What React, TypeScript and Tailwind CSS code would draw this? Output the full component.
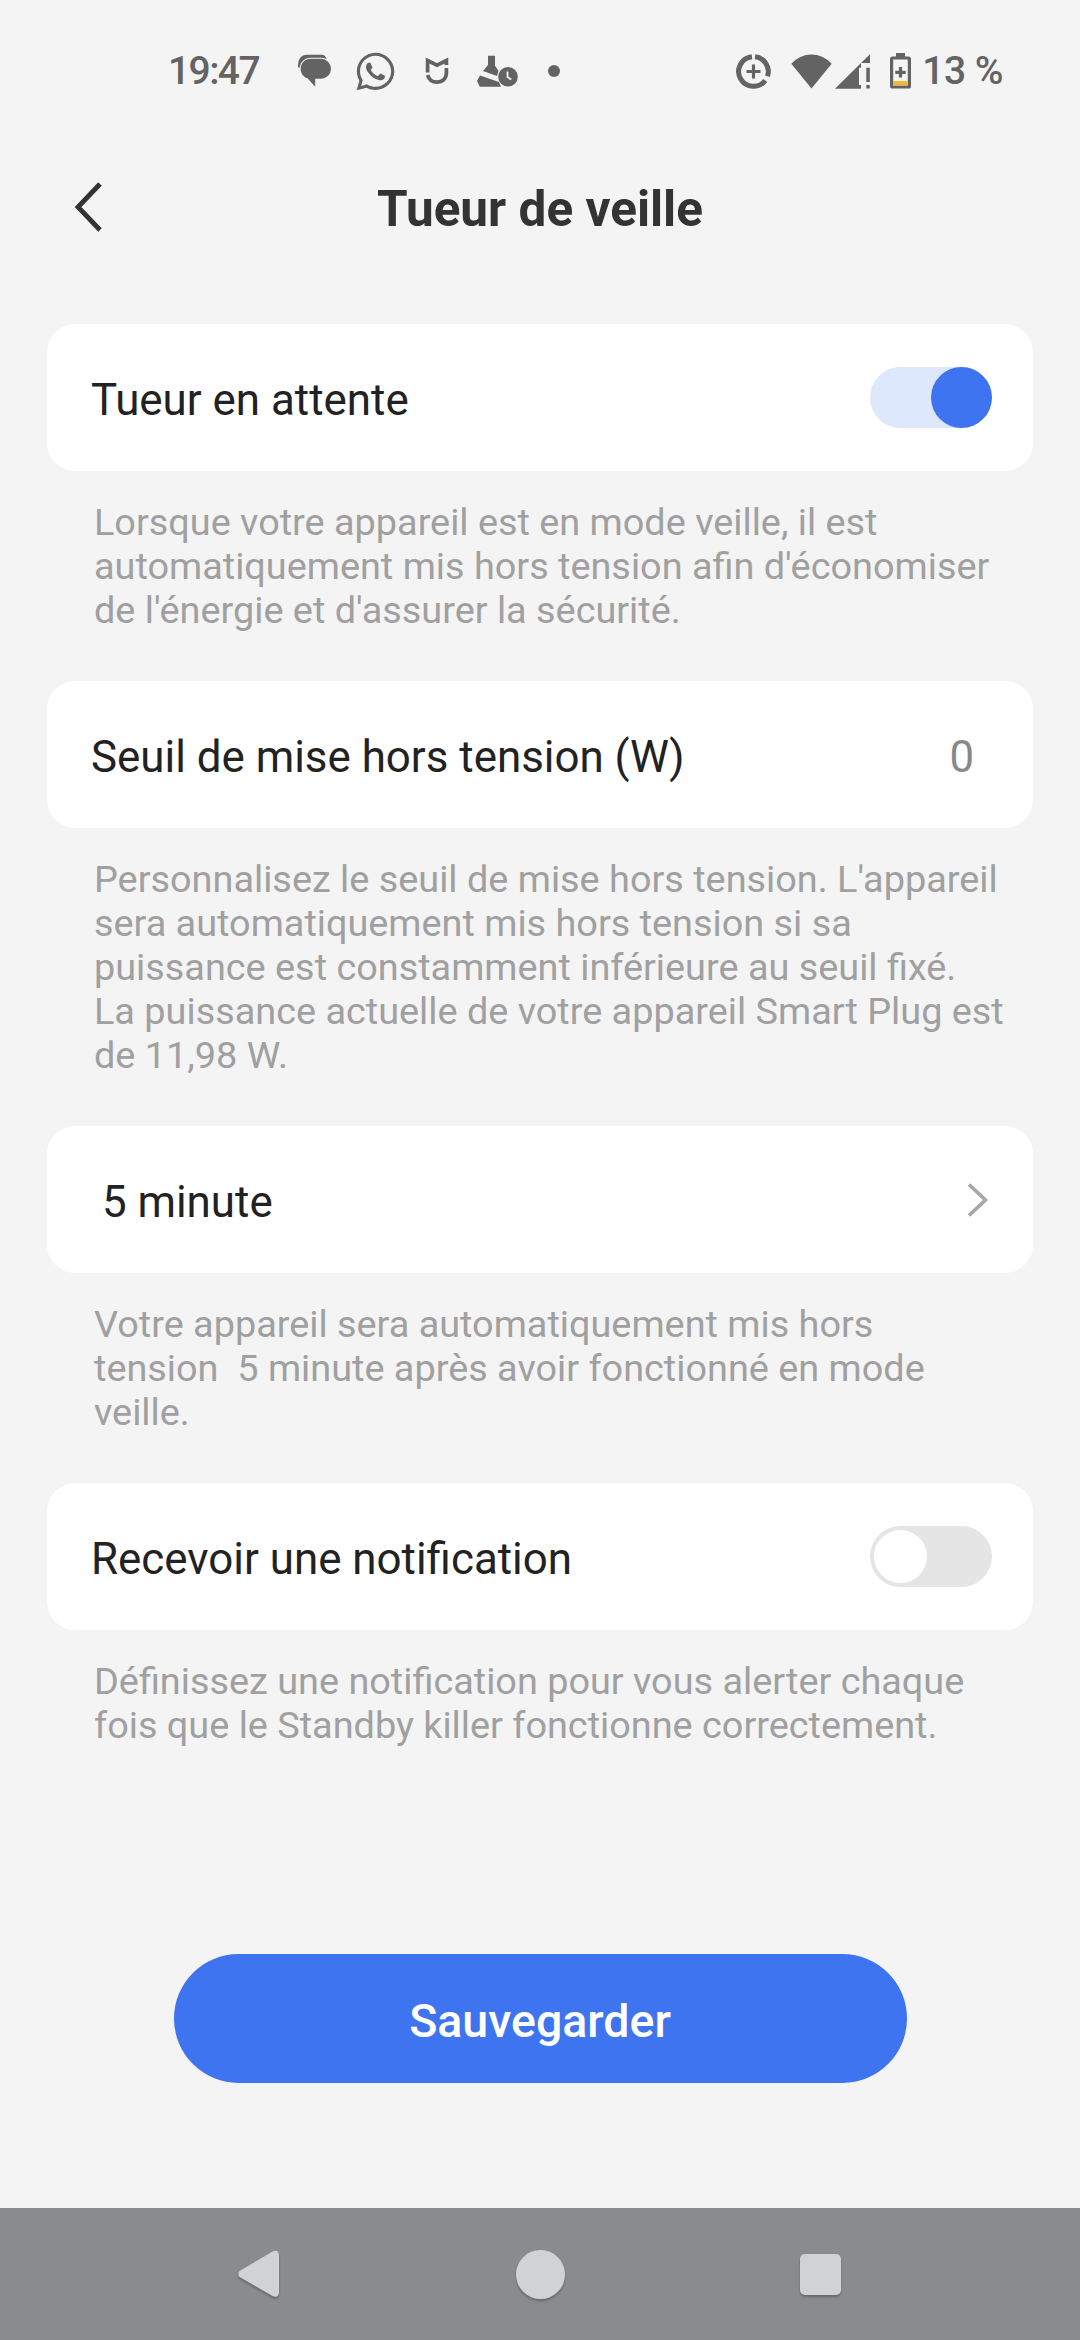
import { ReactNode, useState } from "react";
import { FaWhatsapp } from "react-icons/fa";

export default function App() {
  const [standbyKiller, setStandbyKiller] = useState(true);
  const [notify, setNotify] = useState(false);

  return (
    <div className="flex h-[2340px] w-[1080px] flex-col overflow-hidden bg-[#f4f4f4] font-['Roboto',sans-serif]">
      <StatusBar />
      <header className="grid h-[130px] grid-cols-[180px_1fr_180px] items-center">
        <button type="button" aria-label="Retour" className="pl-[74px]">
          <svg width="28" height="50" viewBox="0 0 28 50" fill="none" stroke="#333" strokeWidth="4.8">
            <path d="M26 2 4 25l22 23" />
          </svg>
        </button>
        <h1 className="pt-1 text-center text-[49.5px] leading-[58px] font-bold text-[#333]">
          Tueur de veille
        </h1>
      </header>

      <main className="flex flex-1 flex-col px-[47px] pt-[52px]">
        <Setting
          label="Tueur en attente"
          description={[
            "Lorsque votre appareil est en mode veille, il est",
            "automatiquement mis hors tension afin d'économiser",
            "de l'énergie et d'assurer la sécurité.",
          ]}
        >
          <Toggle checked={standbyKiller} onChange={setStandbyKiller} />
        </Setting>
        <Setting
          label="Seuil de mise hors tension (W)"
          description={[
            "Personnalisez le seuil de mise hors tension. L'appareil",
            "sera automatiquement mis hors tension si sa",
            "puissance est constamment inférieure au seuil fixé.",
            "La puissance actuelle de votre appareil Smart Plug est",
            "de 11,98 W.",
          ]}
        >
          <span className="pt-1.5 pr-[18px] text-[43.8px] leading-[51px] text-[#888]">0</span>
        </Setting>
        <Setting
          label=" 5 minute"
          description={[
            "Votre appareil sera automatiquement mis hors",
            "tension  5 minute après avoir fonctionné en mode",
            "veille.",
          ]}
        >
          <svg className="mr-[3px]" width="22" height="36" viewBox="0 0 22 36" fill="none" stroke="#a6a6a6" strokeWidth="3.6">
            <path d="M2 2.500 18.500 18 2 33.500" />
          </svg>
        </Setting>
        <Setting
          label="Recevoir une notification"
          description={[
            "Définissez une notification pour vous alerter chaque",
            "fois que le Standby killer fonctionne correctement.",
          ]}
        >
          <Toggle checked={notify} onChange={setNotify} />
        </Setting>

        <button
          type="button"
          className="mt-[158px] h-[129px] w-[733px] self-center rounded-full bg-[#3e74f0] pt-1.5 text-[46.5px] font-medium text-white"
        >
          Sauvegarder
        </button>
      </main>

      <NavigationBar />
    </div>
  );
}

const Setting = ({
  label,
  description,
  children,
}: {
  label: string;
  description: string[];
  children: ReactNode;
}) => {
  return (
    <section>
      <div className="flex h-[147px] items-center justify-between rounded-[28px] bg-white pr-[41px] pl-[44px]">
        <span className="pt-1.5 text-[43.9px] leading-[51px] whitespace-pre text-[#222]">{label}</span>
        {children}
      </div>
      <p className="pt-[29px] pb-[49px] pl-[47px] text-[37.85px] leading-[44px] whitespace-pre text-[#a0a0a0]">
        {description.join("\n")}
      </p>
    </section>
  );
};

const Toggle = ({
  checked,
  onChange,
}: {
  checked: boolean;
  onChange: (checked: boolean) => void;
}) => {
  return (
    <button
      type="button"
      role="switch"
      aria-checked={checked}
      onClick={() => onChange(!checked)}
      className={`flex h-[61px] w-[122px] items-center rounded-full ${
        checked ? "justify-end bg-[#dee8fd]" : "bg-[#e5e5e5] pl-1"
      }`}
    >
      <span
        className={`rounded-full ${
          checked ? "size-[61px] bg-[#3e74f0]" : "size-[53px] bg-white"
        }`}
      />
    </button>
  );
};

const StatusBar = () => {
  return (
    <div className="flex h-[142px] items-center justify-between pr-[77px] pl-[168px] text-[#636363]">
      <div className="flex items-center">
        <span className="w-[130px] text-[39px] font-medium tracking-[-1.6px]">19:47</span>
        {/* messages */}
        <svg width="34" height="34" viewBox="0 0 34 34" fill="currentColor">
          <path d="M0 12.500C0 5 3 .7 9 .7h15c2 0 3.500 1.500 4.500 4V9H8L1 14z" />
          <path
            d="M12.700 4.700H23a10 10 0 0 1 0 20h-5.800v8L9.500 24.200C5 23 2.700 19 2.700 14.700c0-6 4.500-10 10-10z"
            stroke="#f4f4f4"
            strokeWidth="2"
            paintOrder="stroke"
          />
        </svg>
        <FaWhatsapp className="ml-[22px] size-[43px]" />
        {/* mi home */}
        <svg className="ml-[28px]" width="24" height="28" viewBox="0 0 24 28" fill="none" stroke="currentColor" strokeWidth="3.700">
          <path d="M2.600 15.500V3.500L12 8.200l9.400-4.700V8" />
          <path d="M2.600 18C4 23 7.500 25.200 12 25.200c5.500 0 9.400-3.700 9.400-9.200v-5" />
        </svg>
        {/* lab flask with clock */}
        <svg className="ml-[28px]" width="42" height="33" viewBox="0 0 42 33" fill="currentColor">
          <path d="M11 .7h7v10l3.500 5L20 21 6 16l5-6z" />
          <path d="M3 20.500 22 27l2 4.800H2.800L0 26z" />
          <circle cx="31" cy="21.700" r="9.800" />
          <path d="M30.500 16.500v5.500l3.700 2.500" fill="none" stroke="#f4f4f4" strokeWidth="1.800" />
        </svg>
        <span className="ml-[29px] size-3 rounded-full bg-[#636363]" />
      </div>

      <div className="flex items-center">
        {/* data saver */}
        <svg width="35" height="35" viewBox="0 0 35 35" fill="none" stroke="currentColor">
          <path
            d="M19.050 2.800A14.800 14.800 0 0 1 31.500 22.300M29.300 26.400A14.800 14.800 0 1 1 15.950 2.800"
            strokeWidth="5"
          />
          <path d="M10.500 17.500h14M17.500 10.500v14" strokeWidth="3.2" />
        </svg>
        <svg className="ml-[20px]" width="41" height="35" viewBox="0 0 41 35" fill="currentColor">
          <path d="M.3 9.800a26.600 26.600 0 0 1 40.400 0L20.500 34.500z" />
        </svg>
        {/* mobile signal, no data */}
        <svg className="ml-[3px]" width="35" height="35" viewBox="0 0 35 35" fill="currentColor">
          <path d="M35 .3V9h-9zM0 34.700 26 9v4.700h-2V31h2v3.700zM31.300 13.700h3.500V28h-3.500zM31.300 31h3.500v3.500h-3.500z" />
        </svg>
        <svg className="ml-[20px]" width="21" height="36" viewBox="0 0 21 36">
          <path d="M6 0h9v4H6z" fill="currentColor" />
          <rect x="1.600" y="5" width="17.800" height="29" rx="1" fill="none" stroke="currentColor" strokeWidth="3.200" />
          <path d="M3.200 28h14.600v4.400H3.200z" fill="#f0b93a" />
          <path d="M5.300 19.300h10.400M10.500 14.100v10.400" stroke="currentColor" strokeWidth="3.200" />
        </svg>
        <span className="ml-[11px] text-[39px] font-medium tracking-[-0.5px] whitespace-nowrap">13 %</span>
      </div>
    </div>
  );
};

const NavigationBar = () => {
  return (
    <nav className="flex h-[132px] items-center justify-between bg-[#8a8b8e] pr-[239px] pl-[238px] *:drop-shadow-[0_2px_1px_rgba(0,0,0,0.25)]">
      <svg width="42" height="48" viewBox="0 0 42 48" fill="#d1d2d4">
        <path d="M1.500 21 35 1.200Q41 -1 41 6V42Q41 48 35 46.300L1.500 27Q-1 24 1.500 21z" />
      </svg>
      <span className="size-[49px] rounded-full bg-[#d1d2d4]" />
      <span className="size-[41px] rounded-[5px] bg-[#d1d2d4]" />
    </nav>
  );
};
